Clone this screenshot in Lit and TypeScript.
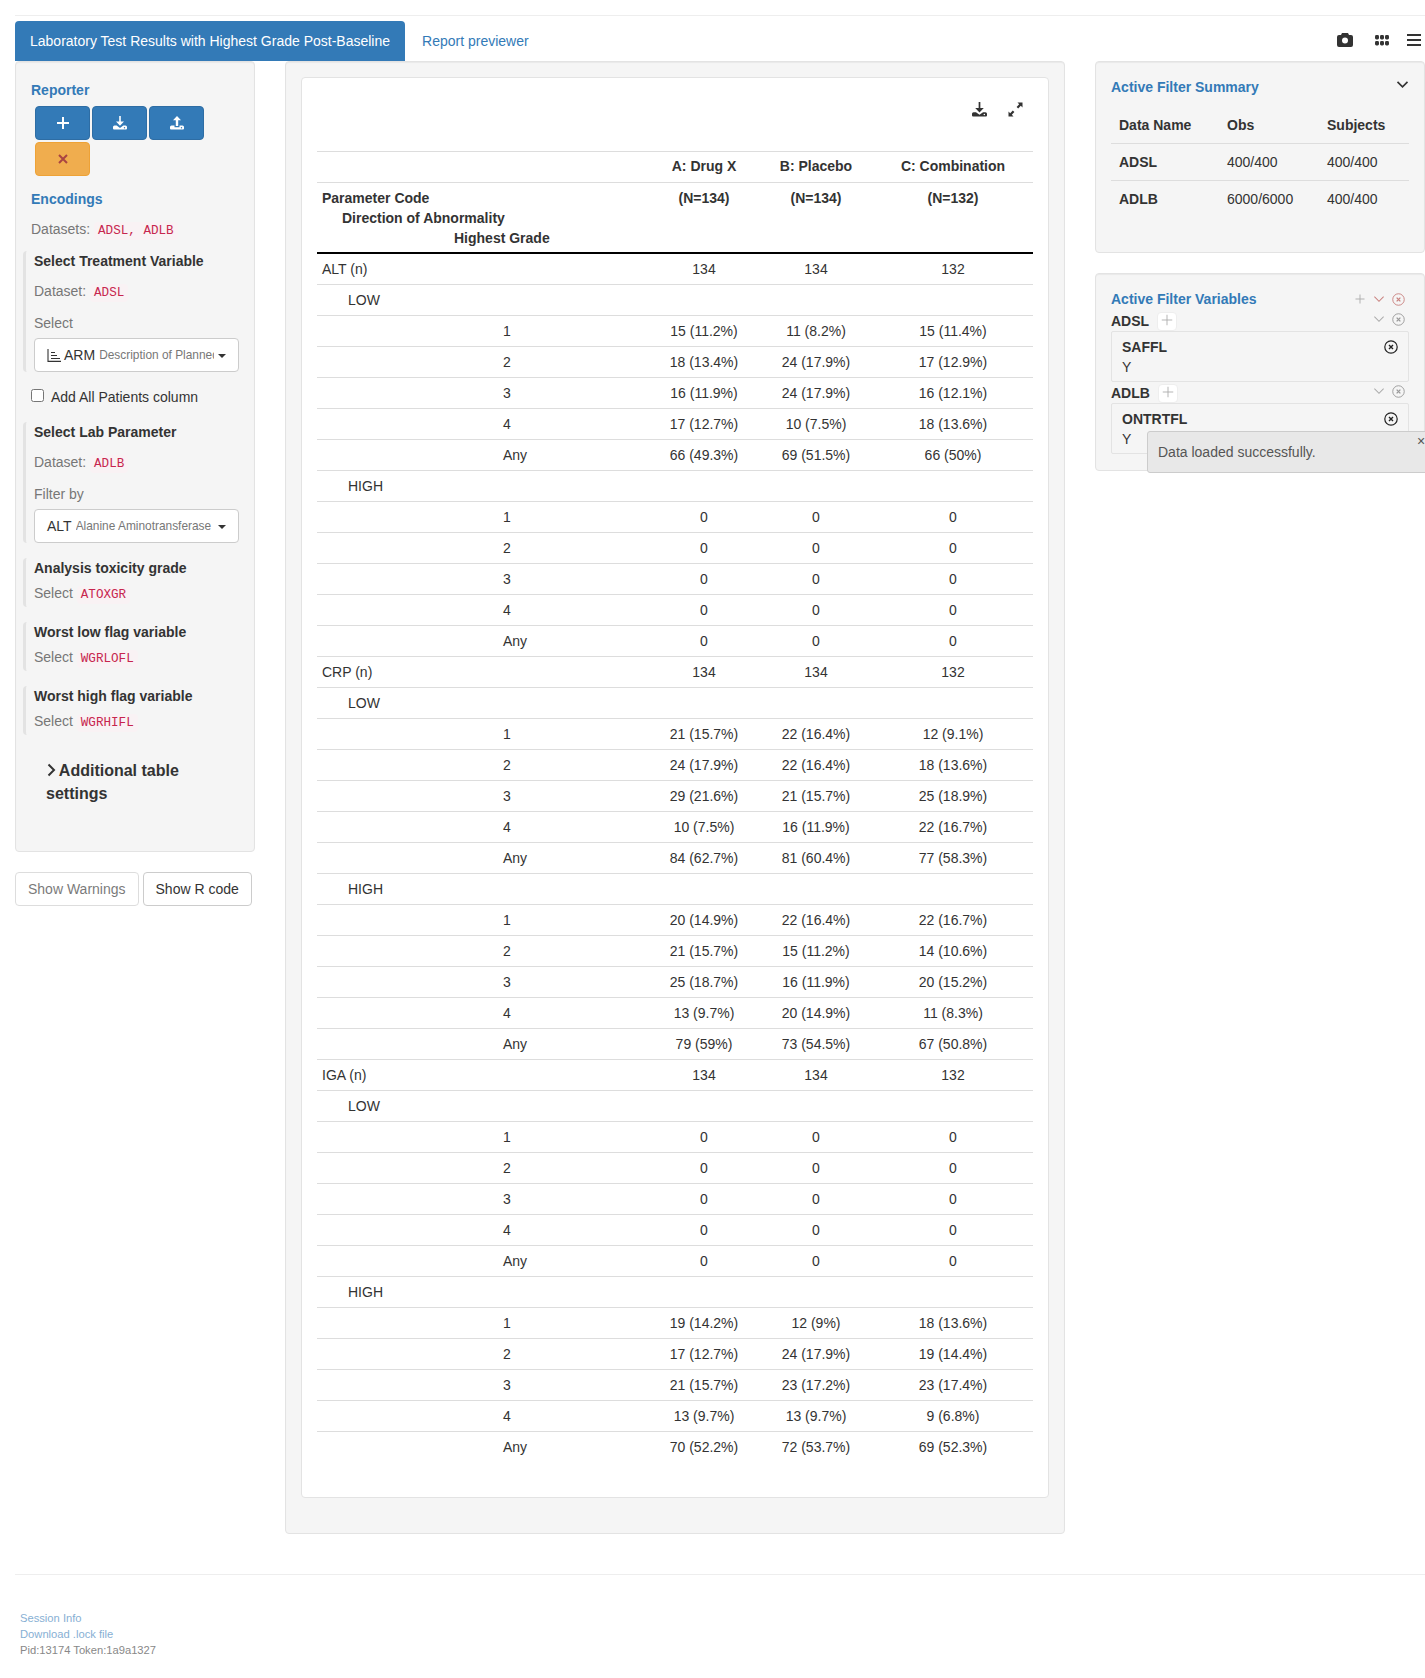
import { LitElement, html, css, svg } from "lit";
import { customElement } from "lit/decorators.js";

const plus = (s = 16, w = 2) => html`<svg width=${s} height=${s} viewBox="0 0 16 16"><path d="M8 2v12M2 8h12" stroke="currentColor" stroke-width=${w} fill="none"/></svg>`;
const xm = (s = 12, w = 2) => html`<svg width=${s} height=${s} viewBox="0 0 12 12"><path d="M2 2l8 8M10 2l-8 8" stroke="currentColor" stroke-width=${w} fill="none"/></svg>`;
const chev = (w = 14, sw = 1.6) => html`<svg width=${w} height=${w * 0.7} viewBox="0 0 14 10"><path d="M1.500 2l5.500 5.500L12.500 2" stroke="currentColor" stroke-width=${sw} fill="none"/></svg>`;
const circX = (s = 14, sw = 1.2) => html`<svg width=${s} height=${s} viewBox="0 0 14 14"><circle cx="7" cy="7" r="6.200" stroke="currentColor" stroke-width=${sw} fill="none"/><path d="M5 5l4 4M9 5l-4 4" stroke="currentColor" stroke-width="1.400" fill="none"/></svg>`;
const dl = (s = 14) => html`<svg width=${s} height=${s} viewBox="0 0 14 14" fill="currentColor"><path d="M6.200 0h1.600v5.500H11L7 9.800 3 5.500h3.200z"/><path fill-rule="evenodd" d="M1.500 9.500h2.200L7 12l3.300-2.500h2.200A1.500 1.500 0 0 1 14 11v1.500a1 1 0 0 1-1 1H1a1 1 0 0 1-1-1V11a1.500 1.500 0 0 1 1.500-1.500zM11.500 11a.7.7 0 1 0 0 1.400.7.7 0 0 0 0-1.400z"/></svg>`;
const ul = (s = 14) => html`<svg width=${s} height=${s} viewBox="0 0 14 14" fill="currentColor"><path d="M7 0l4 4.300H8.200V10H5.800V4.300H3z"/><path fill-rule="evenodd" d="M1.500 9.500h3v1.800h5V9.500h3A1.500 1.500 0 0 1 14 11v1.500a1 1 0 0 1-1 1H1a1 1 0 0 1-1-1V11a1.500 1.500 0 0 1 1.500-1.500zM11.500 11a.7.7 0 1 0 0 1.400.7.7 0 0 0 0-1.400z"/></svg>`;
const expand = html`<svg width="15" height="15" viewBox="0 0 15 15" fill="currentColor"><path d="M9.500 .5h5v5l-1.700-1.700-2.600 2.700-1.600-1.600 2.600-2.700zM5.500 14.500h-5v-5l1.700 1.700 2.600-2.700 1.600 1.600-2.600 2.700z"/></svg>`;
const camera = html`<svg width="16" height="14" viewBox="0 0 16 14" fill="currentColor"><path fill-rule="evenodd" d="M5 0h6l1 2h2a2 2 0 0 1 2 2v8a2 2 0 0 1-2 2H2a2 2 0 0 1-2-2V4a2 2 0 0 1 2-2h2zM8 4.500a3 3 0 1 0 0 6 3 3 0 0 0 0-6z"/></svg>`;
const grid = html`<svg width="14" height="11" viewBox="0 0 14 11" fill="currentColor">${[0, 5, 10].map((x) => [0, 6].map((y) => svg`<rect x=${x} y=${y} width="4" height="4.500" rx="1.400"/>`))}</svg>`;
const bars = html`<svg width="14" height="12" viewBox="0 0 14 12" fill="currentColor"><rect y="0" width="14" height="2"/><rect y="5" width="14" height="2"/><rect y="10" width="14" height="2"/></svg>`;
const sortIcon = html`<svg width="14" height="13" viewBox="0 0 14 13" fill="none" stroke="currentColor" stroke-width="1.100"><path d="M1 0v12.400h13M4 3.500h4M4 6.500h6M4 9.500h9"/></svg>`;

function block(name: string, low: string[][], high: string[][], n: string[]) {
  const lv = ["1", "2", "3", "4", "Any"];
  return html`
    <tr><td class="l0">${name}</td>${n.map((v) => html`<td class="c">${v}</td>`)}</tr>
    <tr><td class="l1">LOW</td><td></td><td></td><td></td></tr>
    ${lv.map((l, i) => html`<tr><td class="l2">${l}</td>${low[i].map((v) => html`<td class="c">${v}</td>`)}</tr>`)}
    <tr><td class="l1">HIGH</td><td></td><td></td><td></td></tr>
    ${lv.map((l, i) => html`<tr><td class="l2">${l}</td>${high[i].map((v) => html`<td class="c">${v}</td>`)}</tr>`)}
  `;
}
const zeros = [0, 1, 2, 3, 4].map(() => ["0", "0", "0"]);
const N = ["134", "134", "132"];

@customElement("app-root")
export class AppRoot extends LitElement {
  static styles = css`
    :host { display: block; position: relative; width: 1425px; height: 1678px; overflow: hidden; background: #fff; color: #333;
      font-family: "Liberation Sans", Arial, sans-serif; font-size: 14px; line-height: 20px; }
    * { box-sizing: border-box; }
    .page { padding: 15px 0 0 15px; }
    .top-hr { height: 1px; background: #eee; }
    .nav { display: flex; align-items: center; height: 40px; margin-top: 5px; }
    .tab { background: #337ab7; color: #fff; height: 40px; padding: 10px 15px; border-radius: 4px 4px 0 0; }
    .link { color: #337ab7; margin-left: 17px; }
    .tools { margin-left: auto; display: flex; align-items: center; color: #333; padding-bottom: 2px; }
    .tools .i1 { margin-right: 22px; display: flex; }
    .tools .i2 { margin-right: 18px; display: flex; }
    .tools .i3 { margin-right: 4px; display: flex; }
    .cols { display: flex; align-items: flex-start; }
    .well { background: #f5f5f5; border: 1px solid #e3e3e3; border-radius: 4px; box-shadow: inset 0 1px 1px rgba(0,0,0,.05); }
    .side { width: 240px; }
    .enc { height: 791px; padding: 18px 15px 0 15px; }
    .h { color: #337ab7; font-weight: 700; }
    .btns { display: flex; flex-wrap: wrap; gap: 2px; margin: 6px 0 0 4px; width: 175px; }
    .btn { width: 55px; height: 34px; background: #337ab7; border: 1px solid #2e6da4; border-radius: 4px; color: #fff; display: flex; align-items: center; justify-content: center; }
    .btn.warn { background: #f0ad4e; border-color: #eea236; color: #a94442; }
    .muted { color: #777; }
    code { font-family: "Liberation Mono", monospace; font-size: 12.600px; line-height: 18px; color: #c7254e; background: #f9f2f4; border-radius: 4px; padding: 2px 4px; }
    .datasets { margin-top: 10px; height: 20px; }
    .enc .encodings { margin-top: 13px; }
    .sec { margin: 15px 0 0 -8px; border-left: 3px solid #e3e3e3; border-radius: 4px; padding-left: 8px; }
    .sec.first { margin-top: 12px; }
    .sec.small { padding-bottom: 4px; }
    .sec .t { font-weight: 700; line-height: 20px; }
    .sec .row { margin-top: 10px; height: 20px; }
    .sec .row2 { margin-top: 5px; height: 20px; }
    .sec .lbl { margin-top: 12px; }
    .select { margin-top: 5px; height: 34px; width: 205px; background: #fff; border: 1px solid #ccc; border-radius: 4px; display: flex; align-items: center; padding: 0 12px; position: relative; white-space: nowrap; overflow: hidden; }
    .select .sm { font-size: 11.900px; color: #777; margin-left: 4px; overflow: hidden; width: 115px; flex: none; }
    .select .sm.w { width: 136px; }
    .select svg { margin-right: 3px; flex: none; }
    .caret { position: absolute; right: 12px; top: 15px; width: 0; height: 0; border-top: 4px solid #333; border-left: 4px solid transparent; border-right: 4px solid transparent; }
    .check { display: flex; align-items: center; margin-top: 15px; height: 20px; }
    .check .box { width: 13px; height: 13px; border: 1px solid #767676; border-radius: 2.500px; background: #fff; margin: -4px 7px 0 0; }
    .check span { color: #333; }
    .more { font-size: 16px; line-height: 23px; font-weight: 700; margin: 24px 0 0 15px; width: 150px; }
    .more svg { margin: 0 -1px -1px 0; }
    .bot { display: flex; gap: 4px; margin-top: 20px; }
    .bot div { height: 34px; border: 1px solid #ccc; border-radius: 4px; padding: 6px 12px; background: #fff; }
    .bot .dis { opacity: .65; }
    .main { width: 780px; height: 1473px; margin-left: 30px; padding: 15px; }
    .panel { background: #fff; border: 1px solid #e3e3e3; border-radius: 4px; height: 1421px; padding: 0 15px; position: relative; }
    .ptools { display: flex; justify-content: flex-end; gap: 21px; height: 73px; padding: 24px 10px 0 0; color: #333; }
    table.t1 { width: 716px; border-collapse: collapse; table-layout: fixed; }
    .t1 td, .t1 th { height: 31px; padding: 5px; border-top: 1px solid #ddd; vertical-align: top; line-height: 20px; }
    .t1 th { font-weight: 700; text-align: center; padding-top: 4px; }
    .t1 .hd th { border-bottom: 2px solid #000; height: 69px; padding-top: 5px; padding-bottom: 4px; }
    .t1 th.left { text-align: left; padding-top: 5px; }
    .t1 td.c { text-align: center; }
    .d1 { padding-left: 20px; }
    .d2 { padding-left: 132px; }
    .t1 .l1 { padding-left: 31px; }
    .t1 .l2 { padding-left: 186px; }
    .right { width: 330px; margin-left: 30px; position: relative; flex: none; }
    .summary { height: 192px; padding: 15px; position: relative; }
    .summary .ch { position: absolute; right: 15px; top: 12px; color: #333; }
    table.t2 { width: 298px; border-collapse: collapse; margin-top: 10px; table-layout: fixed; }
    .t2 th, .t2 td { height: 37px; padding: 8px; text-align: left; line-height: 20px; }
    .t2 tr + tr td { border-top: 1px solid #ddd; }
    .t2 tr:first-child th { border-bottom: 1px solid #ddd; height: 36px; }
    .t2 td.b { font-weight: 700; }
    .vars { margin-top: 20px; height: 198px; padding: 15px 15px 0; position: relative; }
    .vh { display: flex; align-items: center; height: 20px; margin-bottom: 1px; }
    .ds { display: flex; align-items: center; height: 22px; font-weight: 700; }
    .addbtn { width: 20px; height: 19px; background: #fff; border: 1px solid #eee; border-radius: 4px; margin-left: 8px; display: flex; align-items: center; justify-content: center; color: #aaa; padding-bottom: 2px; }
    .ic { margin-left: auto; display: flex; align-items: center; gap: 7px; padding-right: 4px; color: #aaa; }
    .ds .ic { margin-top: -4px; }
    .ic .r { color: #c9827f; display: flex; }
    .ic .g { color: #999; display: flex; }
    .card { border: 1px solid #e3e3e3; background: #f5f5f5; border-radius: 2px; height: 51px; padding: 5px 10px; position: relative; margin-top: -1px; }
    .card b { display: block; }
    .card .x { position: absolute; right: 10px; top: 8px; color: #222; display: flex; }
    .toast { position: absolute; left: 51px; top: 157px; width: 300px; height: 42px; background: #e8e8e8; border: 1px solid #ccc; border-radius: 3px; padding: 10px; color: #555; }
    .toast .close { position: absolute; left: 269px; top: 0; color: #555; font-size: 14px; line-height: 18px; }
    .foot-hr { height: 1px; background: #eee; margin-top: 40px; }
    .foot { font-size: 11.200px; line-height: 16px; margin: 35px 0 0 5px; color: #888; }
    .foot a { color: #337ab7; opacity: .6; display: block; }
  `;

  render() {
    return html`
      <div class="page">
        <div class="top-hr"></div>
        <div class="nav">
          <div class="tab">Laboratory Test Results with Highest Grade Post-Baseline</div>
          <div class="link">Report previewer</div>
          <div class="tools"><span class="i1">${camera}</span><span class="i2">${grid}</span><span class="i3">${bars}</span></div>
        </div>
        <div class="cols">
          <div class="side">
            <div class="well enc">
              <div class="h">Reporter</div>
              <div class="btns">
                <div class="btn">${plus()}</div>
                <div class="btn">${dl()}</div>
                <div class="btn">${ul()}</div>
                <div class="btn warn">${xm()}</div>
              </div>
              <div class="h encodings">Encodings</div>
              <div class="datasets"><span class="muted">Datasets:</span> <code>ADSL, ADLB</code></div>
              <div class="sec first">
                <div class="t">Select Treatment Variable</div>
                <div class="row"><span class="muted">Dataset:</span> <code>ADSL</code></div>
                <div class="lbl muted">Select</div>
                <div class="select">${sortIcon}<span>ARM</span><span class="sm">Description of Planned Arm</span><i class="caret"></i></div>
              </div>
              <div class="check"><div class="box"></div><span>Add All Patients column</span></div>
              <div class="sec">
                <div class="t">Select Lab Parameter</div>
                <div class="row"><span class="muted">Dataset:</span> <code>ADLB</code></div>
                <div class="lbl muted">Filter by</div>
                <div class="select"><span>ALT</span><span class="sm w">Alanine Aminotransferase</span><i class="caret"></i></div>
              </div>
              <div class="sec small"><div class="t">Analysis toxicity grade</div><div class="row2"><span class="muted">Select</span> <code>ATOXGR</code></div></div>
              <div class="sec small"><div class="t">Worst low flag variable</div><div class="row2"><span class="muted">Select</span> <code>WGRLOFL</code></div></div>
              <div class="sec small"><div class="t">Worst high flag variable</div><div class="row2"><span class="muted">Select</span> <code>WGRHIFL</code></div></div>
              <div class="more"><svg width="10" height="14" viewBox="0 0 10 14"><path d="M2.500 1.500l5.500 5.500-5.500 5.500" stroke="currentColor" stroke-width="2" fill="none"/></svg> Additional table settings</div>
            </div>
            <div class="bot"><div class="dis">Show Warnings</div><div>Show R code</div></div>
          </div>
          <div class="well main">
            <div class="panel">
              <div class="ptools">${dl(15)}${expand}</div>
              <table class="t1">
                <colgroup><col style="width:332px"/><col style="width:110px"/><col style="width:114px"/><col style="width:160px"/></colgroup>
                <tr><th></th><th>A: Drug X</th><th>B: Placebo</th><th>C: Combination</th></tr>
                <tr class="hd">
                  <th class="left">Parameter Code<div class="d1">Direction of Abnormality</div><div class="d2">Highest Grade</div></th>
                  <th>(N=134)</th><th>(N=134)</th><th>(N=132)</th>
                </tr>
                ${block("ALT (n)", [["15 (11.2%)","11 (8.2%)","15 (11.4%)"],["18 (13.4%)","24 (17.9%)","17 (12.9%)"],["16 (11.9%)","24 (17.9%)","16 (12.1%)"],["17 (12.7%)","10 (7.5%)","18 (13.6%)"],["66 (49.3%)","69 (51.5%)","66 (50%)"]], zeros, N)}
                ${block("CRP (n)", [["21 (15.7%)","22 (16.4%)","12 (9.1%)"],["24 (17.9%)","22 (16.4%)","18 (13.6%)"],["29 (21.6%)","21 (15.7%)","25 (18.9%)"],["10 (7.5%)","16 (11.9%)","22 (16.7%)"],["84 (62.7%)","81 (60.4%)","77 (58.3%)"]], [["20 (14.9%)","22 (16.4%)","22 (16.7%)"],["21 (15.7%)","15 (11.2%)","14 (10.6%)"],["25 (18.7%)","16 (11.9%)","20 (15.2%)"],["13 (9.7%)","20 (14.9%)","11 (8.3%)"],["79 (59%)","73 (54.5%)","67 (50.8%)"]], N)}
                ${block("IGA (n)", zeros, [["19 (14.2%)","12 (9%)","18 (13.6%)"],["17 (12.7%)","24 (17.9%)","19 (14.4%)"],["21 (15.7%)","23 (17.2%)","23 (17.4%)"],["13 (9.7%)","13 (9.7%)","9 (6.8%)"],["70 (52.2%)","72 (53.7%)","69 (52.3%)"]], N)}
              </table>
            </div>
          </div>
          <div class="right">
            <div class="well summary">
              <div class="h">Active Filter Summary</div>
              <span class="ch">${chev(13, 1.8)}</span>
              <table class="t2">
                <colgroup><col style="width:108px"/><col style="width:100px"/><col/></colgroup>
                <tr><th>Data Name</th><th>Obs</th><th>Subjects</th></tr>
                <tr><td class="b">ADSL</td><td>400/400</td><td>400/400</td></tr>
                <tr><td class="b">ADLB</td><td>6000/6000</td><td>400/400</td></tr>
              </table>
            </div>
            <div class="well vars">
              <div class="vh"><span class="h">Active Filter Variables</span><span class="ic">${plus(12, 1.2)}<span class="r">${chev(12, 1.2)}</span><span class="r">${circX(13, 1)}</span></span></div>
              <div class="ds">ADSL<span class="addbtn">${plus(14, 1)}</span><span class="ic">${chev(12, 1.2)}<span class="g">${circX(13, 1)}</span></span></div>
              <div class="card"><b>SAFFL</b>Y<span class="x">${circX(14, 1.2)}</span></div>
              <div class="ds">ADLB<span class="addbtn">${plus(14, 1)}</span><span class="ic">${chev(12, 1.2)}<span class="g">${circX(13, 1)}</span></span></div>
              <div class="card"><b>ONTRTFL</b>Y<span class="x">${circX(14, 1.2)}</span></div>
              <div class="toast">Data loaded successfully.<span class="close">×</span></div>
            </div>
          </div>
        </div>
        <div class="foot-hr"></div>
        <div class="foot"><a>Session Info</a><a>Download .lock file</a>Pid:13174 Token:1a9a1327</div>
      </div>
    `;
  }
}
